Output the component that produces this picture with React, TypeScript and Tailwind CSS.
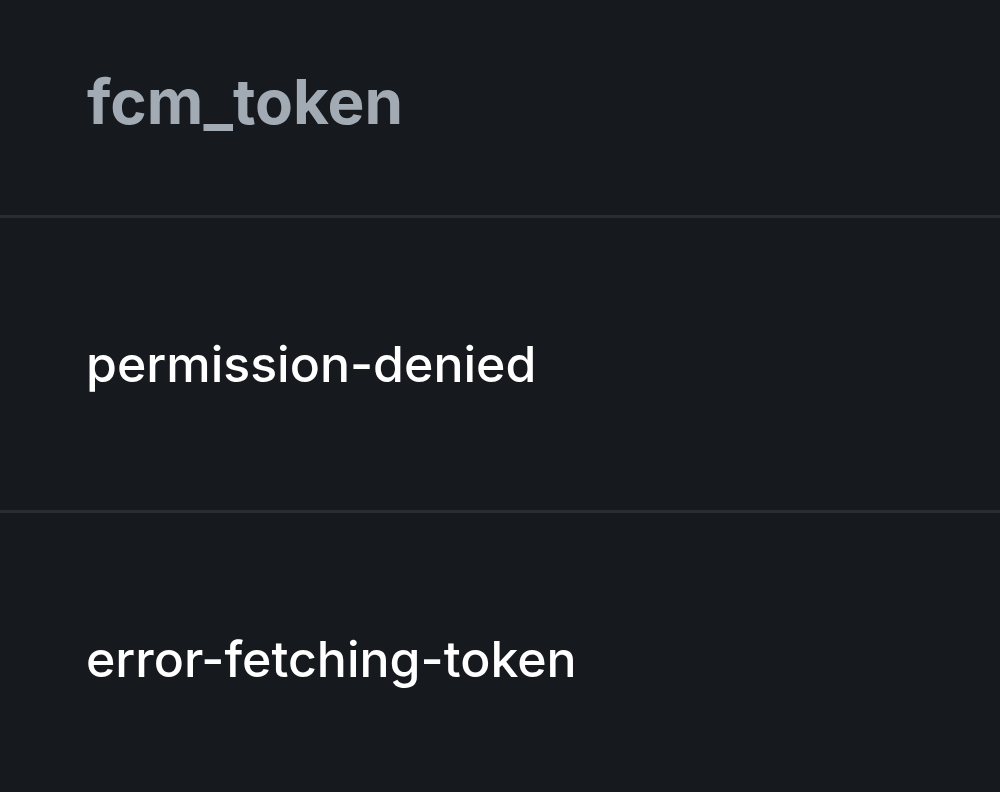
export default function App() {
  const rows = ["permission-denied", "error-fetching-token"];
  return (
    <div className="h-[792px] w-[1000px] overflow-hidden bg-[#16191d] font-['Inter','Liberation_Sans',sans-serif]">
      <div className="flex h-[215px] items-center pl-[87px] pb-[13px] text-[62px] font-bold text-[#a2aab4]">
        fcm_token
      </div>
      {rows.map((r) => (
        <div key={r} className="flex h-[295px] items-center border-t-[3px] border-[#292d33] pl-[86px] text-[50px] font-medium text-white">
          {r}
        </div>
      ))}
    </div>
  );
}
